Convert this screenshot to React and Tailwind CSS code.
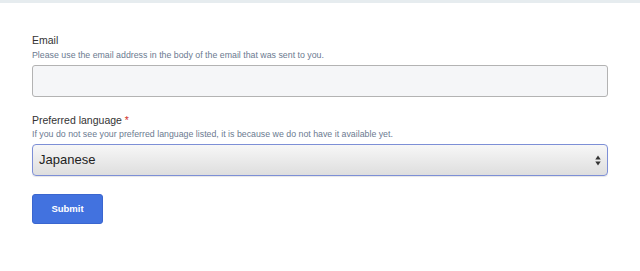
import React from "react";

export default function App() {
  return (
    <div className="w-[640px] h-[271px] bg-white overflow-hidden" style={{ fontFamily: "'Liberation Sans', Arial, sans-serif" }}>
      <div className="h-[3px] bg-[#e6ecef]" />
      <div className="px-8 pt-[31px]">
        <div>
          <label className="block text-[10.5px] leading-[13px] text-[#333]">Email</label>
          <p className="mt-[2px] text-[8.8px] leading-[12px] text-[#6b7a90]">Please use the email address in the body of the email that was sent to you.</p>
          <input className="mt-[4px] block w-[576px] h-[32px] rounded-[3px] border border-[#b3b3b3] bg-[#f5f6f8] outline-none" />
        </div>
        <div className="mt-[17px]">
          <label className="block text-[10.5px] leading-[13px] text-[#333]">Preferred language <span className="text-[#d0312d]">*</span></label>
          <p className="mt-[1px] text-[8.8px] leading-[12px] text-[#6b7a90]">If you do not see your preferred language listed, it is because we do not have it available yet.</p>
          <div className="mt-[4px] relative w-[576px] h-[32px] rounded-[4px] border border-[#7d8fd6] bg-gradient-to-b from-[#f7f7f7] to-[#dedede] flex items-center pl-[6px] shadow-[0_1px_1px_rgba(0,0,0,0.1)]">
            <span className="text-[13px] text-[#222]">Japanese</span>
            <svg className="absolute right-[6px] top-[10px]" width="6" height="11" viewBox="0 0 6 11">
              <path d="M3 0.5 L5.7 4.5 L0.3 4.5 Z" fill="#333" />
              <path d="M3 10.5 L5.7 6.5 L0.3 6.5 Z" fill="#333" />
            </svg>
          </div>
        </div>
        <button className="mt-[18px] w-[71px] h-[30px] rounded-[3px] bg-[#4272df] border border-[#3a66cf] text-white text-[9.5px] font-bold">Submit</button>
      </div>
    </div>
  );
}
